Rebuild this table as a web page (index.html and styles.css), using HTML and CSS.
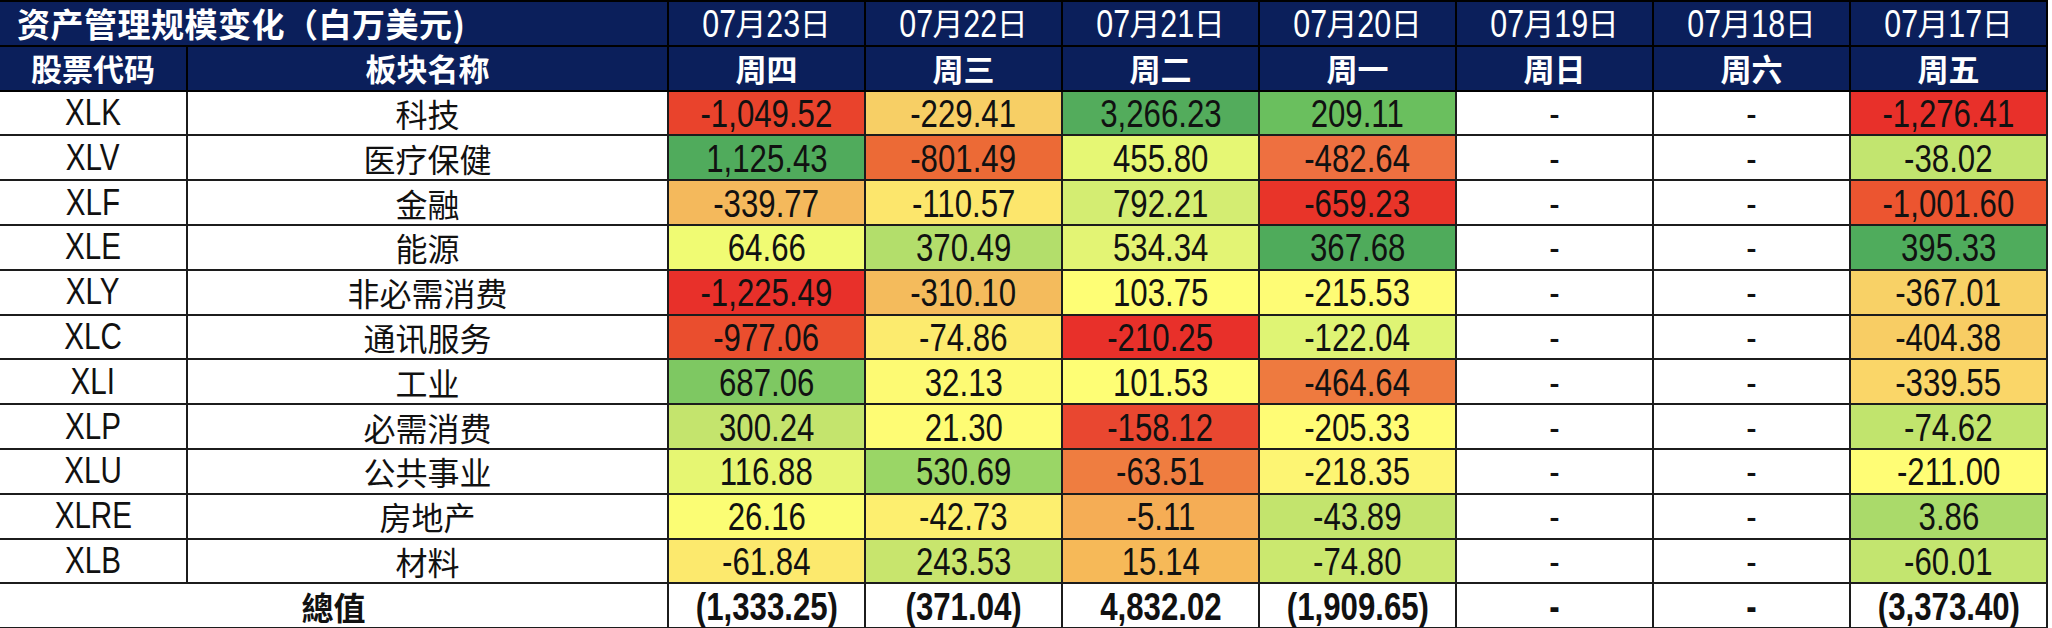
FILE: index.html
```html
<!DOCTYPE html>
<html lang="zh-CN">
<head>
<meta charset="utf-8">
<title>资产管理规模变化</title>
<link rel="stylesheet" href="styles.css">
</head>
<body>
<table class="aum">
  <colgroup>
    <col class="c-code"><col class="c-name">
    <col class="c-day"><col class="c-day"><col class="c-day"><col class="c-day"><col class="c-day"><col class="c-day"><col class="c-day">
  </colgroup>
  <thead>
    <tr class="hd hd-top">
      <th colspan="2" class="title">资产管理规模变化（白万美元)</th>
      <th class="date"><span class="n">07</span>月<span class="n">23</span>日</th>
      <th class="date"><span class="n">07</span>月<span class="n">22</span>日</th>
      <th class="date"><span class="n">07</span>月<span class="n">21</span>日</th>
      <th class="date"><span class="n">07</span>月<span class="n">20</span>日</th>
      <th class="date"><span class="n">07</span>月<span class="n">19</span>日</th>
      <th class="date"><span class="n">07</span>月<span class="n">18</span>日</th>
      <th class="date"><span class="n">07</span>月<span class="n">17</span>日</th>
    </tr>
    <tr class="hd hd-sub">
      <th>股票代码</th><th>板块名称</th>
      <th>周四</th><th>周三</th><th>周二</th><th>周一</th><th>周日</th><th>周六</th><th>周五</th>
    </tr>
  </thead>
  <tbody>
    <tr><td class="code"><span class="n">XLK</span></td><td class="name">科技</td>
      <td class="num" style="background:#e9432c"><span class="n">-1,049.52</span></td><td class="num" style="background:#f7cf65"><span class="n">-229.41</span></td><td class="num" style="background:#53ac5c"><span class="n">3,266.23</span></td><td class="num" style="background:#6abf5e"><span class="n">209.11</span></td><td class="num"><span class="n">-</span></td><td class="num"><span class="n">-</span></td><td class="num" style="background:#e8302a"><span class="n">-1,276.41</span></td></tr>
    <tr><td class="code"><span class="n">XLV</span></td><td class="name">医疗保健</td>
      <td class="num" style="background:#50ab5c"><span class="n">1,125.43</span></td><td class="num" style="background:#ec6a36"><span class="n">-801.49</span></td><td class="num" style="background:#e6f774"><span class="n">455.80</span></td><td class="num" style="background:#ee7040"><span class="n">-482.64</span></td><td class="num"><span class="n">-</span></td><td class="num"><span class="n">-</span></td><td class="num" style="background:#c2e56f"><span class="n">-38.02</span></td></tr>
    <tr><td class="code"><span class="n">XLF</span></td><td class="name">金融</td>
      <td class="num" style="background:#f4b95c"><span class="n">-339.77</span></td><td class="num" style="background:#fce66c"><span class="n">-110.57</span></td><td class="num" style="background:#d4ed72"><span class="n">792.21</span></td><td class="num" style="background:#e83429"><span class="n">-659.23</span></td><td class="num"><span class="n">-</span></td><td class="num"><span class="n">-</span></td><td class="num" style="background:#ec5530"><span class="n">-1,001.60</span></td></tr>
    <tr><td class="code"><span class="n">XLE</span></td><td class="name">能源</td>
      <td class="num" style="background:#f0fb73"><span class="n">64.66</span></td><td class="num" style="background:#b3de6b"><span class="n">370.49</span></td><td class="num" style="background:#e3f474"><span class="n">534.34</span></td><td class="num" style="background:#4fab5b"><span class="n">367.68</span></td><td class="num"><span class="n">-</span></td><td class="num"><span class="n">-</span></td><td class="num" style="background:#4fac5c"><span class="n">395.33</span></td></tr>
    <tr><td class="code"><span class="n">XLY</span></td><td class="name">非必需消费</td>
      <td class="num" style="background:#e8302a"><span class="n">-1,225.49</span></td><td class="num" style="background:#f4bb5c"><span class="n">-310.10</span></td><td class="num" style="background:#fefe75"><span class="n">103.75</span></td><td class="num" style="background:#fefc75"><span class="n">-215.53</span></td><td class="num"><span class="n">-</span></td><td class="num"><span class="n">-</span></td><td class="num" style="background:#f8d166"><span class="n">-367.01</span></td></tr>
    <tr><td class="code"><span class="n">XLC</span></td><td class="name">通讯服务</td>
      <td class="num" style="background:#ea4e2e"><span class="n">-977.06</span></td><td class="num" style="background:#fceb6e"><span class="n">-74.86</span></td><td class="num" style="background:#e8302a"><span class="n">-210.25</span></td><td class="num" style="background:#dff474"><span class="n">-122.04</span></td><td class="num"><span class="n">-</span></td><td class="num"><span class="n">-</span></td><td class="num" style="background:#f8cd64"><span class="n">-404.38</span></td></tr>
    <tr><td class="code"><span class="n">XLI</span></td><td class="name">工业</td>
      <td class="num" style="background:#7ec862"><span class="n">687.06</span></td><td class="num" style="background:#fdfa73"><span class="n">32.13</span></td><td class="num" style="background:#fefe75"><span class="n">101.53</span></td><td class="num" style="background:#ee7a3f"><span class="n">-464.64</span></td><td class="num"><span class="n">-</span></td><td class="num"><span class="n">-</span></td><td class="num" style="background:#fad668"><span class="n">-339.55</span></td></tr>
    <tr><td class="code"><span class="n">XLP</span></td><td class="name">必需消费</td>
      <td class="num" style="background:#c4e46d"><span class="n">300.24</span></td><td class="num" style="background:#fefc74"><span class="n">21.30</span></td><td class="num" style="background:#e94730"><span class="n">-158.12</span></td><td class="num" style="background:#fffc75"><span class="n">-205.33</span></td><td class="num"><span class="n">-</span></td><td class="num"><span class="n">-</span></td><td class="num" style="background:#c1e46d"><span class="n">-74.62</span></td></tr>
    <tr><td class="code"><span class="n">XLU</span></td><td class="name">公共事业</td>
      <td class="num" style="background:#e6f672"><span class="n">116.88</span></td><td class="num" style="background:#9ad666"><span class="n">530.69</span></td><td class="num" style="background:#ef7d40"><span class="n">-63.51</span></td><td class="num" style="background:#fdf573"><span class="n">-218.35</span></td><td class="num"><span class="n">-</span></td><td class="num"><span class="n">-</span></td><td class="num" style="background:#fffd75"><span class="n">-211.00</span></td></tr>
    <tr><td class="code"><span class="n">XLRE</span></td><td class="name">房地产</td>
      <td class="num" style="background:#fbfd74"><span class="n">26.16</span></td><td class="num" style="background:#fdef6f"><span class="n">-42.73</span></td><td class="num" style="background:#f5ad55"><span class="n">-5.11</span></td><td class="num" style="background:#c3e46d"><span class="n">-43.89</span></td><td class="num"><span class="n">-</span></td><td class="num"><span class="n">-</span></td><td class="num" style="background:#aada6a"><span class="n">3.86</span></td></tr>
    <tr><td class="code"><span class="n">XLB</span></td><td class="name">材料</td>
      <td class="num" style="background:#fce96d"><span class="n">-61.84</span></td><td class="num" style="background:#c8e56d"><span class="n">243.53</span></td><td class="num" style="background:#f6b958"><span class="n">15.14</span></td><td class="num" style="background:#cbe86f"><span class="n">-74.80</span></td><td class="num"><span class="n">-</span></td><td class="num"><span class="n">-</span></td><td class="num" style="background:#c3e56f"><span class="n">-60.01</span></td></tr>
  </tbody>
  <tfoot>
    <tr class="total">
      <td colspan="2" class="name">總值</td>
      <td class="num"><span class="n">(1,333.25)</span></td><td class="num"><span class="n">(371.04)</span></td><td class="num"><span class="n">4,832.02</span></td><td class="num"><span class="n">(1,909.65)</span></td><td class="num"><span class="n">-</span></td><td class="num"><span class="n">-</span></td><td class="num"><span class="n">(3,373.40)</span></td>
    </tr>
  </tfoot>
</table>
</body>
</html>
```

FILE: styles.css
```css
html, body {
  margin: 0;
  padding: 0;
  background: #ffffff;
}

.aum {
  border-collapse: collapse;
  table-layout: fixed;
  width: 2048px;
  border-top: 1px solid #c8c8c8;
  font-family: "Liberation Sans", "Noto Sans CJK SC", sans-serif;
  color: #111111;
}

.c-code { width: 187px; }
.c-name { width: 481px; }
.c-day { width: 197px; }

.aum tr {
  height: 44.8px;
}

.aum th,
.aum td {
  padding: 0;
  text-align: center;
  vertical-align: middle;
  border: 2px solid #1c1c1c;
  line-height: 36px;
  white-space: nowrap;
}

/* narrow numerals (Arial Narrow look) */
.n {
  display: inline-block;
  font-family: "Liberation Sans", sans-serif;
  line-height: 36px;
  transform: scaleX(0.8);
  transform-origin: center;
  margin: 0 -0.1em;
}

.hd th {
  background: #0b1f5b;
  color: #ffffff;
  border-color: #000000;
}

.hd-top th {
  font-weight: normal;
}

.hd-top .title {
  text-align: left;
  padding-left: 17px;
  font-family: "Noto Sans CJK SC", sans-serif;
  font-weight: bold;
  font-size: 33px;
  letter-spacing: 0.5px;
  border-left: none;
}

.hd-top .date {
  font-family: "Noto Sans CJK SC", sans-serif;
  font-size: 31px;
}

.hd-top .date .n {
  font-size: 38px;
  vertical-align: -2px;
  margin: 0 -0.12em;
}

.hd-sub th {
  font-family: "Noto Sans CJK SC", sans-serif;
  font-weight: bold;
  font-size: 31px;
}

.hd-sub th:first-child,
tbody td:first-child,
.total td:first-child {
  border-left: none;
}

.code {
  font-size: 37px;
  background: #ffffff;
}

.name {
  font-family: "Noto Sans CJK SC", sans-serif;
  font-size: 32px;
  background: #ffffff;
}

.num {
  font-size: 39px;
  background: #ffffff;
}

.num .n {
  vertical-align: -2px;
}

.total td {
  font-weight: bold;
}
```
